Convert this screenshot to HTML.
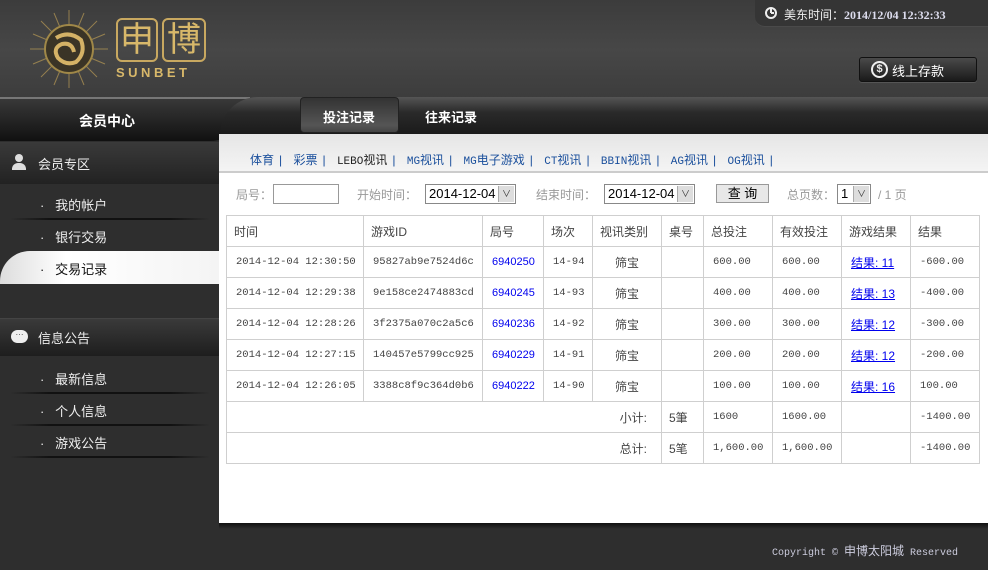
<!DOCTYPE html>
<html><head><meta charset="utf-8"><style>
*{margin:0;padding:0;box-sizing:border-box}
body{width:988px;height:570px;overflow:hidden;position:relative;background:#2e2e2e;font-family:"Liberation Sans","Noto Sans CJK SC",sans-serif;font-size:12px}
.abs{position:absolute}
#hdr{left:0;top:0;width:988px;height:100px;background:linear-gradient(180deg,#3c3c3c 0%,#474747 50%,#3c3c3c 100%)}
.cn{font-family:"Liberation Sans","Noto Sans CJK SC",sans-serif}
.mono{font-family:"Liberation Mono","Noto Sans CJK SC",monospace}
table{border-collapse:collapse;position:absolute;left:226px;top:215px;width:753px;background:#fff;table-layout:fixed}
td{border:1px solid #cfcfcf;height:31px;color:#444;font-size:10.5px;padding-left:9px;font-family:"Liberation Mono","Noto Sans CJK SC",monospace;white-space:nowrap;overflow:hidden}
tr.h td{font-family:"Liberation Sans","Noto Sans CJK SC",sans-serif;font-size:12px;padding-left:7px}
.bl{color:#0000ee;font-family:"Liberation Sans",sans-serif;font-size:11px}
.u{color:#0000ee;text-decoration:underline;font-family:"Liberation Sans","Noto Sans CJK SC",sans-serif;font-size:12px}
.side{color:#eee;font-size:13px}
.sep{height:2px;background:linear-gradient(90deg,transparent,#111 20%,#111 80%,transparent)}
.lnk{color:#1a4f9c;font-size:12px}
.lnk i{font-style:normal;color:#1a4f9c;margin:0 8px 0 5px}
.sel{background:#fff;border:1px solid #888;height:20px;font-size:13px;color:#000;padding-left:3px;line-height:18px;overflow:hidden}
.sel b{position:absolute;right:1px;top:1px;width:16px;height:16px;background:#ddd;border-left:1px solid #aaa;font-size:9px;text-align:center;line-height:16px;font-weight:normal;color:#333}
.gl{color:#999;font-size:12px}
</style></head><body>
<div id="hdr" class="abs"></div>
<!-- logo -->
<svg class="abs" style="left:26px;top:8px" width="86" height="82" viewBox="0 0 86 82">
<g stroke="#b89a55" stroke-width="1" opacity="0.7">
<line x1="43" y1="2" x2="43" y2="80"/><line x1="4" y1="41" x2="82" y2="41"/><line x1="15" y1="13" x2="71" y2="69"/><line x1="71" y1="13" x2="15" y2="69"/>
<line x1="28" y1="5" x2="58" y2="77"/><line x1="58" y1="5" x2="28" y2="77"/><line x1="7" y1="26" x2="79" y2="56"/><line x1="79" y1="26" x2="7" y2="56"/>
</g>
<circle cx="43" cy="41" r="24" fill="#3a3426" stroke="#a08848" stroke-width="2"/>
<path d="M30 30 Q43 22 55 32 Q60 45 50 54 Q40 58 32 50 Q26 40 36 36 Q46 34 48 44" fill="none" stroke="#d4b266" stroke-width="4"/>
</svg>
<div class="abs" style="left:116px;top:18px;width:42px;height:44px;border:2px solid #c8a860;border-radius:6px;color:#d8b86a;font-size:34px;line-height:40px;text-align:center">申</div>
<div class="abs" style="left:162px;top:18px;width:44px;height:44px;border:2px solid #c8a860;border-radius:6px;color:#d8b86a;font-size:34px;line-height:40px;text-align:center">博</div>
<div class="abs" style="left:116px;top:65px;width:92px;color:#d8b86a;font-size:13px;font-weight:bold;letter-spacing:3.5px">SUNBET</div>
<!-- time -->
<div class="abs" style="left:755px;top:0;width:233px;height:27px;background:#353535;border-radius:0 0 0 10px;border-bottom:1px solid #4a4a4a"></div>
<div class="abs" style="left:765px;top:7px;width:12px;height:12px;border:2px solid #eee;border-radius:50%"></div>
<div class="abs" style="left:770px;top:9px;width:2px;height:4px;background:#eee"></div>
<div class="abs" style="left:771px;top:12px;width:3px;height:2px;background:#eee"></div>
<div class="abs" style="left:784px;top:6px;color:#eee;font-size:12px">美东时间：<span style="font-family:'Liberation Serif',serif;color:#dde;font-weight:bold">2014/12/04 12:32:33</span></div>
<div class="abs" style="left:859px;top:57px;width:118px;height:25px;border-radius:3px;background:linear-gradient(#4a4a4a,#1a1a1a);border:1px solid #111;box-shadow:0 1px 0 #555"></div>
<div class="abs" style="left:871px;top:61px;width:17px;height:17px;border:2px solid #eee;border-radius:50%;color:#eee;font-size:11px;line-height:13px;text-align:center;font-weight:bold">$</div>
<div class="abs" style="left:892px;top:61px;color:#fff;font-size:13px">线上存款</div>
<!-- nav -->
<div class="abs" style="left:0;top:97px;width:250px;height:44px;background:linear-gradient(#3a3a3a,#111);border-radius:0 0 40px 0"></div>
<div class="abs" style="left:0;top:97px;width:250px;height:2px;background:#777"></div>
<div class="abs" style="left:220px;top:97px;width:768px;height:38px;background:linear-gradient(#555,#2a2a2a 40%,#1a1a1a);border-radius:45px 0 0 0"></div>
<div class="abs" style="left:300px;top:97px;width:99px;height:36px;background:linear-gradient(#333,#555 80%,#444);border:1px solid #222;border-radius:4px"></div>
<div class="abs" style="left:79px;top:111px;color:#fff;font-size:14px;font-weight:bold">会员中心</div>
<div class="abs" style="left:323px;top:107px;color:#fff;font-size:13px;font-weight:bold">投注记录</div>
<div class="abs" style="left:425px;top:107px;color:#fff;font-size:13px;font-weight:bold">往来记录</div>
<!-- sidebar -->
<div class="abs" style="left:0;top:142px;width:219px;height:42px;background:linear-gradient(#3a3a3a,#222)"></div>
<div class="abs" style="left:12px;top:154px;width:14px;height:16px;"><div style="margin:0 auto;width:8px;height:8px;border-radius:50%;background:#ddd"></div><div style="width:14px;height:7px;background:#ddd;border-radius:6px 6px 0 0;margin-top:1px"></div></div>
<div class="abs side" style="left:38px;top:154px">会员专区</div>
<div class="abs" style="left:0;top:251px;width:219px;height:33px;background:linear-gradient(90deg,#ddd,#fff 30%,#f4f4f4);border-radius:30px 0 0 0"></div>
<div class="abs side" style="left:40px;top:195px">·&nbsp;&nbsp; 我的帐户</div>
<div class="sep abs" style="left:10px;top:218px;width:200px"></div>
<div class="abs side" style="left:40px;top:227px">·&nbsp;&nbsp; 银行交易</div>
<div class="abs side" style="left:40px;top:259px;color:#111">·&nbsp;&nbsp; 交易记录</div>
<div class="abs" style="left:0;top:318px;width:219px;height:38px;background:linear-gradient(#3a3a3a,#1e1e1e);border-top:1px solid #444"></div>
<div class="abs" style="left:11px;top:330px;width:17px;height:13px;background:#eee;border-radius:7px;color:#333;font-size:8px;text-align:center;line-height:9px">···</div>
<div class="abs side" style="left:38px;top:328px">信息公告</div>
<div class="abs side" style="left:40px;top:369px">·&nbsp;&nbsp; 最新信息</div>
<div class="sep abs" style="left:10px;top:392px;width:200px"></div>
<div class="abs side" style="left:40px;top:401px">·&nbsp;&nbsp; 个人信息</div>
<div class="sep abs" style="left:10px;top:424px;width:200px"></div>
<div class="abs side" style="left:40px;top:433px">·&nbsp;&nbsp; 游戏公告</div>
<div class="sep abs" style="left:10px;top:456px;width:200px"></div>
<!-- content -->
<div class="abs" style="left:219px;top:134px;width:769px;height:389px;background:#fff"></div>
<div class="abs" style="left:219px;top:134px;width:769px;height:39px;background:linear-gradient(#e6e6e6,#f4f4f4);border-bottom:2px solid #ccc"></div>
<div class="abs lnk" style="left:250px;top:151px;white-space:nowrap">体育<i>|</i> 彩票<i>|</i> <span class="mono" style="font-size:11px;color:#222">LEBO</span><span style="color:#222">视讯</span><i>|</i> <span class="mono" style="font-size:11px">MG</span>视讯<i>|</i> <span class="mono" style="font-size:11px">MG</span>电子游戏<i>|</i> <span class="mono" style="font-size:11px">CT</span>视讯<i>|</i> <span class="mono" style="font-size:11px">BBIN</span>视讯<i>|</i> <span class="mono" style="font-size:11px">AG</span>视讯<i>|</i> <span class="mono" style="font-size:11px">OG</span>视讯<i>|</i></div>
<div class="abs gl" style="left:236px;top:186px">局号：</div>
<div class="abs" style="left:273px;top:184px;width:66px;height:20px;border:1px solid #999"></div>
<div class="abs gl" style="left:357px;top:186px">开始时间：</div>
<div class="abs sel" style="left:425px;top:184px;width:91px">2014-12-04<b>∨</b></div>
<div class="abs gl" style="left:536px;top:186px">结束时间：</div>
<div class="abs sel" style="left:604px;top:184px;width:91px">2014-12-04<b>∨</b></div>
<div class="abs" style="left:716px;top:184px;width:53px;height:19px;background:#e8e8e8;border:1px solid #999;font-size:13px;text-align:center;line-height:17px;color:#000">查 询</div>
<div class="abs gl" style="left:787px;top:186px">总页数：</div>
<div class="abs sel" style="left:837px;top:184px;width:34px">1<b>∨</b></div>
<div class="abs gl" style="left:878px;top:186px">/ 1 页</div>
<table>
<colgroup><col style="width:137px"><col style="width:119px"><col style="width:61px"><col style="width:49px"><col style="width:69px"><col style="width:42px"><col style="width:69px"><col style="width:69px"><col style="width:69px"><col style="width:69px"></colgroup>
<tr class="h"><td>时间</td><td>游戏ID</td><td>局号</td><td>场次</td><td>视讯类别</td><td>桌号</td><td>总投注</td><td>有效投注</td><td>游戏结果</td><td>结果</td></tr>
<tr><td>2014-12-04 12:30:50</td><td>95827ab9e7524d6c</td><td class="bl">6940250</td><td>14-94</td><td class="cn" style="font-size:12px;padding-left:22px">筛宝</td><td></td><td>600.00</td><td>600.00</td><td><span class="u">结果: 11</span></td><td>-600.00</td></tr>
<tr><td>2014-12-04 12:29:38</td><td>9e158ce2474883cd</td><td class="bl">6940245</td><td>14-93</td><td class="cn" style="font-size:12px;padding-left:22px">筛宝</td><td></td><td>400.00</td><td>400.00</td><td><span class="u">结果: 13</span></td><td>-400.00</td></tr>
<tr><td>2014-12-04 12:28:26</td><td>3f2375a070c2a5c6</td><td class="bl">6940236</td><td>14-92</td><td class="cn" style="font-size:12px;padding-left:22px">筛宝</td><td></td><td>300.00</td><td>300.00</td><td><span class="u">结果: 12</span></td><td>-300.00</td></tr>
<tr><td>2014-12-04 12:27:15</td><td>140457e5799cc925</td><td class="bl">6940229</td><td>14-91</td><td class="cn" style="font-size:12px;padding-left:22px">筛宝</td><td></td><td>200.00</td><td>200.00</td><td><span class="u">结果: 12</span></td><td>-200.00</td></tr>
<tr><td>2014-12-04 12:26:05</td><td>3388c8f9c364d0b6</td><td class="bl">6940222</td><td>14-90</td><td class="cn" style="font-size:12px;padding-left:22px">筛宝</td><td></td><td>100.00</td><td>100.00</td><td><span class="u">结果: 16</span></td><td>100.00</td></tr>
<tr><td colspan="5" class="cn" style="text-align:right;padding-right:14px;font-size:12px">小计:</td><td class="cn" style="padding-left:7px;font-size:12px">5筆</td><td>1600</td><td>1600.00</td><td></td><td>-1400.00</td></tr>
<tr><td colspan="5" class="cn" style="text-align:right;padding-right:14px;font-size:12px">总计:</td><td class="cn" style="padding-left:7px;font-size:12px">5笔</td><td>1,600.00</td><td>1,600.00</td><td></td><td>-1400.00</td></tr>
</table>
<div class="abs" style="left:219px;top:523px;width:769px;height:6px;background:linear-gradient(#111,#2e2e2e)"></div>
<div class="abs mono" style="left:772px;top:542px;color:#ccd;font-size:10px;white-space:nowrap">Copyright © <span class="cn" style="font-size:12px">申博太阳城</span> Reserved</div>
</body></html>
